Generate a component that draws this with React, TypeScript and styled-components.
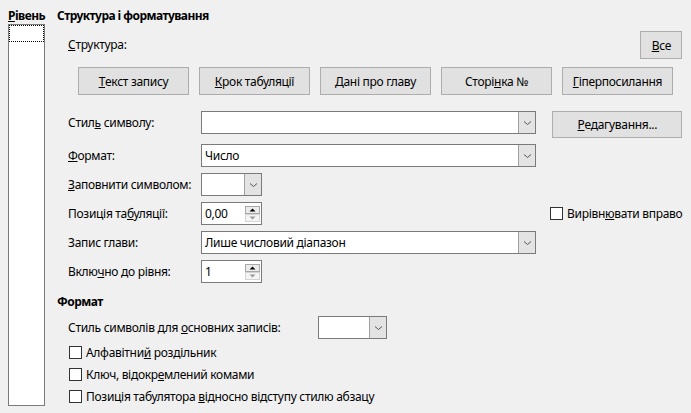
import React from "react"
import styled, { createGlobalStyle } from "styled-components"

const GlobalStyle = createGlobalStyle`
  body {
    margin: 0;
    background: #f0f0f0;
    font-family: "Noto Sans", "Liberation Sans", sans-serif;
    font-size: 12px;
    letter-spacing: -0.3px;
    color: #000;
  }
`

const Page = styled.div`
  display: flex;
  gap: 12px;
  width: 691px;
  height: 413px;
  padding: 8px 10px 0 8px;
  box-sizing: border-box;
  overflow: hidden;
`

const LevelColumn = styled.div`
  display: flex;
  flex-direction: column;
  width: 38px;
`

const Heading = styled.div`
  font-weight: bold;
  letter-spacing: -0.55px;
  line-height: 16px;
  height: 16px;
  white-space: nowrap;
`

const LevelList = styled.div`
  height: 382px;
  background: #fff;
  border: 1px solid #7a7a7a;
  box-sizing: border-box;
`

const FocusRow = styled.div`
  height: 17px;
  border: 1px dotted #000;
  box-sizing: border-box;
`

const Main = styled.div`
  flex: 1;
  display: flex;
  flex-direction: column;
`

const StructureRow = styled.div`
  display: flex;
  justify-content: space-between;
  align-items: center;
  margin-top: 7px;
  padding-left: 11px;
`

const Label = styled.span`
  white-space: nowrap;
  line-height: 16px;
`

const Button = styled.div<{ $w?: number; $h?: number }>`
  display: flex;
  align-items: center;
  justify-content: center;
  width: ${(p) => (p.$w ? `${p.$w}px` : "auto")};
  height: ${(p) => p.$h ?? 28}px;
  box-sizing: border-box;
  background: #e1e1e1;
  border: 1px solid #adadad;
  white-space: nowrap;
`

const ButtonRow = styled.div`
  display: flex;
  gap: 10px;
  margin-top: 8px;
  padding-left: 21px;
`

const FormGrid = styled.div`
  display: grid;
  grid-template-columns: 133px 335px 1fr;
  grid-template-rows: 27px repeat(5, 23px);
  row-gap: 6px;
  align-items: center;
  margin-top: 16px;
  padding-left: 11px;
`

const RowLabel = styled(Label)<{ $top?: boolean }>`
  align-self: ${(p) => (p.$top ? "start" : "center")};
  line-height: ${(p) => (p.$top ? "23px" : "16px")};
`

const Right = styled.div`
  justify-self: end;
  align-self: start;
`

const CheckRight = styled.div`
  justify-self: start;
  padding-left: 14px;
`

const Combo = styled.div<{ $w: number; $top?: boolean }>`
  display: flex;
  width: ${(p) => p.$w}px;
  height: 23px;
  box-sizing: border-box;
  background: #fff;
  border: 1px solid #7a7a7a;
  align-self: ${(p) => (p.$top ? "start" : "center")};
`

const ComboText = styled.div`
  flex: 1;
  padding-left: 3px;
  line-height: 21px;
  white-space: nowrap;
  overflow: hidden;
`

const ComboArrow = styled.div`
  width: 16px;
  display: flex;
  align-items: center;
  justify-content: center;
  background: #e3e3e3;
  border-left: 1px solid #a0a0a0;
`

const Spin = styled.div`
  display: flex;
  width: 61px;
  height: 23px;
  box-sizing: border-box;
  background: #fff;
  border: 1px solid #7a7a7a;
`

const SpinButtons = styled.div`
  display: flex;
  flex-direction: column;
  justify-content: center;
  width: 15px;
  padding-right: 1px;
`

const SpinButton = styled.div<{ $down?: boolean }>`
  display: flex;
  align-items: center;
  justify-content: center;
  height: 8px;
  box-sizing: border-box;
  border: 1px solid ${(p) => (p.$down ? "#d4d4d4" : "#a8a8a8")};
  background: ${(p) => (p.$down ? "#f4f4f4" : "#ececec")};
`

const FormatRow = styled.div`
  display: flex;
  align-items: center;
  margin-top: 6px;
  padding-left: 11px;
`

const FormatLabel = styled(Label)`
  width: 250px;
`

const CheckList = styled.div`
  display: flex;
  flex-direction: column;
  margin-top: 2px;
  padding-left: 12px;
`

const CheckRow = styled.label`
  display: flex;
  align-items: center;
  gap: 4px;
  height: 22px;
  white-space: nowrap;
`

const Box = styled.span`
  width: 13px;
  height: 13px;
  box-sizing: border-box;
  border: 1px solid #333;
  background: #fff;
  flex: none;
`

const SectionHeading = styled(Heading)`
  margin-top: 11px;
`

const Chevron = () => (
  <svg width="9" height="6" viewBox="0 0 9 6">
    <path d="M1 1.5 L4.5 4.5 L8 1.5" fill="none" stroke="#555" strokeWidth="1" />
  </svg>
)

const Tri = ({ down }: { down?: boolean }) => (
  <svg width="7" height="4" viewBox="0 0 7 4">
    <path d={down ? "M0.5 0.5 L6.5 0.5 L3.5 3.5 Z" : "M0.5 3.5 L6.5 3.5 L3.5 0.5 Z"} fill={down ? "#9a9a9a" : "#000"} />
  </svg>
)

const ComboBox = ({ w, text, top }: { w: number; text?: string; top?: boolean }) => (
  <Combo $w={w} $top={top}>
    <ComboText>{text}</ComboText>
    <ComboArrow>
      <Chevron />
    </ComboArrow>
  </Combo>
)

const SpinField = ({ value }: { value: string }) => (
  <Spin>
    <ComboText>{value}</ComboText>
    <SpinButtons>
      <SpinButton>
        <Tri />
      </SpinButton>
      <SpinButton $down>
        <Tri down />
      </SpinButton>
    </SpinButtons>
  </Spin>
)

const Check = ({ children }: { children: React.ReactNode }) => (
  <CheckRow>
    <Box />
    <span>{children}</span>
  </CheckRow>
)

export default function App() {
  return (
    <>
      <GlobalStyle />
      <Page>
        <LevelColumn>
          <Heading>
            <u>Р</u>івень
          </Heading>
          <LevelList>
            <FocusRow />
          </LevelList>
        </LevelColumn>
        <Main>
          <Heading>Структура і форматування</Heading>
          <StructureRow>
            <Label>
              <u>С</u>труктура:
            </Label>
            <Button $w={42}>
              <u>В</u>се
            </Button>
          </StructureRow>
          <ButtonRow>
            <Button $w={111}>
              <u>Т</u>екст запису
            </Button>
            <Button $w={111}>
              <u>К</u>рок табуляції
            </Button>
            <Button $w={111}>
              <u>Д</u>ані про главу
            </Button>
            <Button $w={111}>
              Сторі<u>н</u>ка №
            </Button>
            <Button $w={111}>
              <u>Г</u>іперпосилання
            </Button>
          </ButtonRow>
          <FormGrid>
            <RowLabel $top>
              Стил<u>ь</u> символу:
            </RowLabel>
            <ComboBox w={335} top />
            <Right>
              <Button $w={130} $h={27}>
                <u>Р</u>едагування...
              </Button>
            </Right>

            <RowLabel>
              <u>Ф</u>ормат:
            </RowLabel>
            <ComboBox w={335} text="Число" />
            <span />

            <RowLabel>
              <u>З</u>аповнити символом:
            </RowLabel>
            <ComboBox w={61} />
            <span />

            <RowLabel>
              Позиція та<u>б</u>уляції:
            </RowLabel>
            <SpinField value="0,00" />
            <CheckRight>
              <Check>
                Вирівн<u>ю</u>вати вправо
              </Check>
            </CheckRight>

            <RowLabel>Запис глави:</RowLabel>
            <ComboBox w={335} text="Лише числовий діапазон" />
            <span />

            <RowLabel>
              Вклю<u>ч</u>но до рівня:
            </RowLabel>
            <SpinField value="1" />
            <span />
          </FormGrid>
          <SectionHeading>Формат</SectionHeading>
          <FormatRow>
            <FormatLabel>
              Стиль символів для <u>о</u>сновних записів:
            </FormatLabel>
            <ComboBox w={69} />
          </FormatRow>
          <CheckList>
            <Check>
              Алфавітни<u>й</u> роздільник
            </Check>
            <Check>
              Ключ, відокр<u>е</u>млений комами
            </Check>
            <Check>
              Позиція табулятора <u>в</u>ідносно відступу стилю абзацу
            </Check>
          </CheckList>
        </Main>
      </Page>
    </>
  )
}
